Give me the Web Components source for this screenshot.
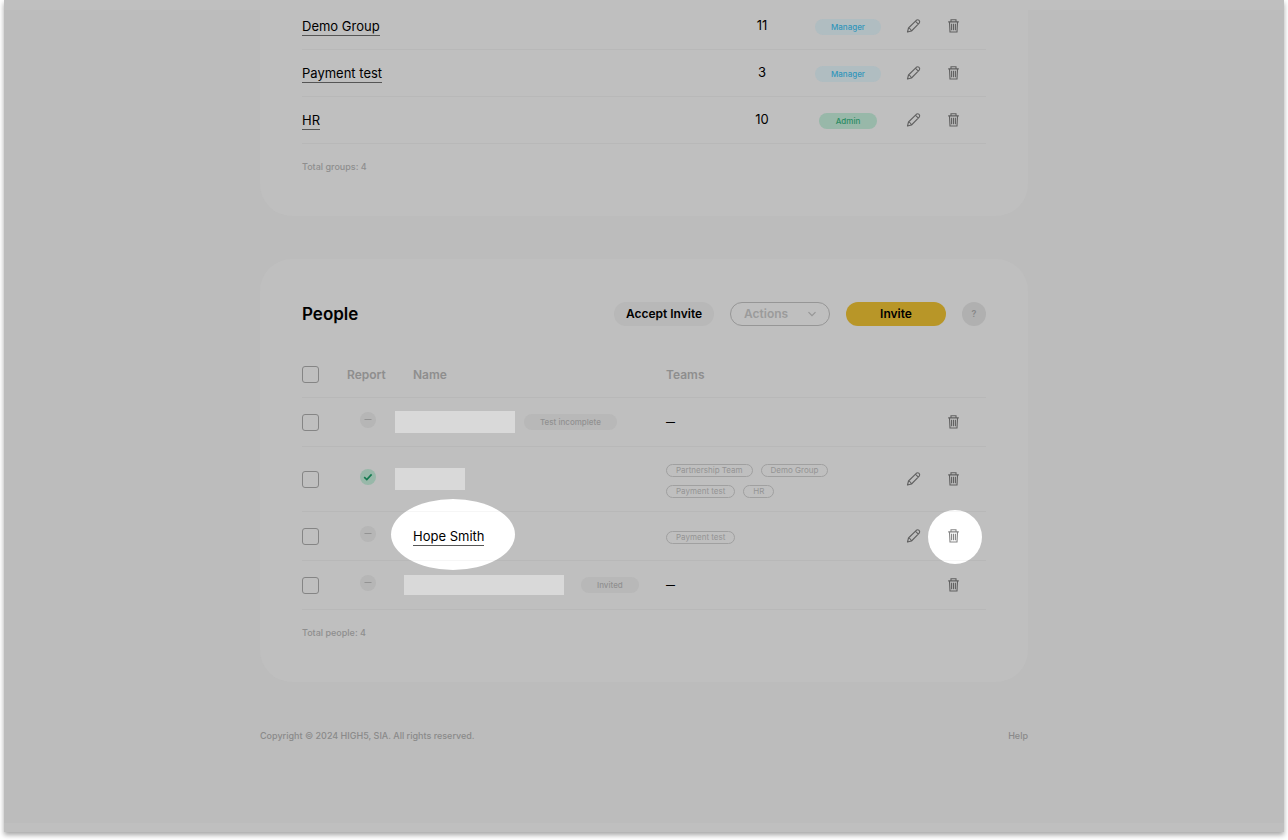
<!DOCTYPE html>
<html lang="en">
<head>
<meta charset="utf-8">
<title>Groups and people</title>
<style>
body { margin: 0; padding: 0 4px 8px; background: #fff; color: #000; font: 500 12px/16px Inter, "Liberation Sans", sans-serif; }
</style>
</head>
<body>
<team-page></team-page>

<script>
const define = (name, html, setup) => {
  const template = document.createElement('template');
  template.innerHTML = html;
  customElements.define(name, class extends HTMLElement {
    constructor() {
      super();
      this.attachShadow({ mode: 'open' }).append(template.content.cloneNode(true));
    }
    connectedCallback() {
      if (setup && !this.ready) { this.ready = true; setup(this, this.shadowRoot); }
    }
  });
};

const ICONS = {
  trash: `<path d="M3.5 4.4 4 14H11L11.5 4.4M2.2 3.9H12.8M5 3.7V1.7H10V3.7" fill="none" stroke="currentColor" stroke-width="1.1"/><path d="M5.6 5.8V12.2M7.5 5.8V12.2M9.4 5.8V12.2" stroke="currentColor" stroke-width="1.1"/>`,
  edit: `<path d="M1.5 14 2.5 10 10.3 2.3Q11.7 1.2 13.1 2.4 14.3 3.8 13.2 5.2L5.5 13ZM9.4 3.2 12.3 6.1M2.5 10Q4.7 10.5 5.5 13" fill="none" stroke="currentColor" stroke-width="1.1" stroke-linejoin="round"/>`
};

define('icon-button', `
<style>
:host { display: block; width: 16px; height: 16px; margin: 0 auto; color: #606060; }
button { display: block; width: 16px; height: 16px; padding: 0; border: 0; background: none; color: inherit; }
svg { display: block; width: 16px; height: 16px; }
</style>
<button type="button"><svg viewBox="0 0 16 16" aria-hidden="true"></svg></button>`, (host, root) => {
  root.querySelector('svg').innerHTML = ICONS[host.getAttribute('icon')];
  root.querySelector('button').setAttribute('aria-label', host.getAttribute('label'));
});

define('role-badge', `
<style>
:host { display: inline-block; box-sizing: border-box; height: 16px; padding: 0 16px; border-radius: 8px; background: #b8b8b8; color: #909090; font-size: 8px; line-height: 16px; white-space: nowrap; vertical-align: middle; }
:host([tone="manager"]) { background: #b0bdc1; color: #3296bb; }
:host([tone="admin"]) { padding: 0 17px; background: #98b8a9; color: #2a8b62; }
</style><slot></slot>`);

define('team-chip', `
<style>
:host { display: block; box-sizing: border-box; height: 13px; padding: 0 9px; border: 1px solid #a0a0a0; border-radius: 7px; color: #949494; font-size: 8px; font-weight: 400; line-height: 11px; white-space: nowrap; }
</style><slot></slot>`);

define('report-status', `
<style>
:host { display: block; width: 16px; height: 16px; border-radius: 50%; background: #b6b6b6; color: #939393; }
:host([done]) { background: #98b8a9; color: #147a50; }
svg { display: block; width: 16px; height: 16px; }
.yes, :host([done]) .no { display: none; }
:host([done]) .yes { display: inline; }
</style>
<svg viewBox="0 0 16 16" fill="none" stroke="currentColor" aria-hidden="true"><path class="no" d="M4.5 7.5H11.5"/><path class="yes" d="M4.2 8.2 6.8 10.6 11.6 5.4" stroke-width="1.6"/></svg>`);

define('name-link', `
<style>
:host { display: inline-block; padding-bottom: 2px; font-size: 13px; font-weight: 400; line-height: 16px; vertical-align: middle; }
a { display: block; padding: 3px 0 1px; border-bottom: 1px solid #555; color: #000; text-decoration: none; white-space: nowrap; }
</style><a href="#"><slot></slot></a>`);

define('panel-card', `
<style>
:host { display: block; position: relative; isolation: isolate; padding: 43px 42px 41px; border-radius: 32px; background: #bfbfbf; }
:host([continued]) { padding-top: 3px; border-radius: 0 0 32px 32px; }
.total { padding-top: 15px; color: #8e8e8e; font-size: 9px; line-height: 16px; }
</style>
<slot></slot><div class="total"><slot name="total"></slot></div>`);

const TABLE = `
:host { display: block; }
table { width: 100%; table-layout: fixed; border-collapse: separate; border-spacing: 0; }
th, td { box-sizing: border-box; padding: 0; border-bottom: 1px solid rgba(0, 0, 0, .035); text-align: left; vertical-align: middle; }
.edit { width: 40px; }
.remove { width: 52px; padding-right: 12px; position: relative; }`;

define('groups-table', `
<style>${TABLE}
td { height: 47px; }
.count { width: 80px; padding-bottom: 2px; text-align: center; font-size: 13px; font-weight: 400; }
.role { width: 92px; padding-top: 2px; text-align: center; line-height: 0; }
</style>
<table aria-label="Groups"><tbody></tbody></table>`, (host, root) => {
  const groups = [['Demo Group', 11, 'Manager'], ['Payment test', 3, 'Manager'], ['HR', 10, 'Admin']];
  root.querySelector('tbody').innerHTML = groups.map(([name, count, role]) => `
    <tr><td><name-link>${name}</name-link></td><td class="count">${count}</td>
    <td class="role"><role-badge tone="${role.toLowerCase()}">${role}</role-badge></td>
    <td class="edit"><icon-button icon="edit" label="Edit ${name}"></icon-button></td>
    <td class="remove"><icon-button icon="trash" label="Delete ${name}"></icon-button></td></tr>`).join('');
});

define('people-toolbar', `
<style>
:host { display: flex; align-items: center; gap: 16px; margin-bottom: 26px; }
h2 { margin: 0 auto 0 0; font-size: 17px; line-height: 24px; font-weight: 600; }
button, select { box-sizing: border-box; width: 100px; height: 24px; padding: 0; border: 0; border-radius: 12px; font: 600 12px/22px Inter, "Liberation Sans", sans-serif; color: #000; background: #b8b8b8; white-space: nowrap; }
.primary { background: #b89628; }
.menu { position: relative; }
select { display: block; appearance: none; padding: 0 13px; border: 1px solid #969696; background: none; color: #9b9b9b; opacity: 1; }
.menu svg { position: absolute; right: 13px; top: 7px; width: 10px; height: 10px; pointer-events: none; }
button.help { width: 24px; background: #b0b0b0; color: #888; font-size: 9px; }
</style>
<h2>People</h2>
<button type="button">Accept Invite</button>
<div class="menu"><select aria-label="Actions"><option>Actions</option></select><svg viewBox="0 0 10 10" fill="none" stroke="#969696" stroke-width="1.2" aria-hidden="true"><path d="M1.5 3.2 5 6.7 8.5 3.2"/></svg></div>
<button type="button" class="primary">Invite</button>
<button type="button" class="help" aria-label="Help">?</button>`);

define('people-table', `
<style>${TABLE}
th { height: 46px; color: #8e8e8e; font-size: 12px; font-weight: 600; }
td { height: 49px; }
tr.tall td { height: 65px; }
.pick { width: 45px; }
.report { width: 66px; }
td.report { padding: 0 0 5px 13px; }
.name { width: 253px; position: relative; }
.person { display: flex; align-items: center; }
.blank { width: 120px; height: 22px; margin: 0 9px 0 -18px; background: #d9d9d9; }
.blank.short { width: 70px; }
.blank.wide { width: 160px; height: 20px; margin: 0 17px 0 -9px; }
.teams { display: flex; flex-wrap: wrap; gap: 8px; padding-top: 3px; }
.none { font-size: 9px; font-weight: 600; }
input { appearance: none; display: block; box-sizing: border-box; width: 17px; height: 17px; margin: 0; border: 1px solid #858585; border-radius: 3px; }
.spot { position: absolute; z-index: -1; border-radius: 50%; background: #fff; }
.name .spot { left: -22px; top: -13px; width: 124px; height: 71px; }
.remove .spot { left: -6px; top: -2px; width: 54px; height: 54px; }
.spot + icon-button { color: #858585; }
</style>
<table>
<thead><tr><th class="pick"><input type="checkbox" aria-label="Select everyone"></th><th class="report">Report</th><th class="name">Name</th><th>Teams</th><th class="edit"></th><th class="remove"></th></tr></thead>
<tbody></tbody></table>`, (host, root) => {
  const people = [
    { person: '<span class="blank"></span><role-badge>Test incomplete</role-badge>', teams: [] },
    { person: '<span class="blank short"></span>', teams: ['Partnership Team', 'Demo Group', 'Payment test', 'HR'], done: true },
    { person: '<name-link>Hope Smith</name-link>', teams: ['Payment test'], spot: true },
    { person: '<span class="blank wide"></span><role-badge>Invited</role-badge>', teams: [] }
  ];
  root.querySelector('tbody').innerHTML = people.map(({ person, teams, done, spot }) => {
    const light = spot ? '<span class="spot"></span>' : '';
    return `<tr class="${done ? 'tall' : ''}"><td class="pick"><input type="checkbox" aria-label="Select person"></td>
    <td class="report"><report-status ${done ? 'done' : ''}></report-status></td>
    <td class="name">${light}<div class="person">${person}</div></td>
    <td class="${teams.length ? '' : 'none'}">${teams.length ? `<div class="teams">${teams.map(t => `<team-chip>${t}</team-chip>`).join('')}</div>` : '—'}</td>
    <td class="edit">${teams.length ? '<icon-button icon="edit" label="Edit person"></icon-button>' : ''}</td>
    <td class="remove">${light}<icon-button icon="trash" label="Remove person"></icon-button></td></tr>`;
  }).join('');
});

define('site-footer', `
<style>
:host { display: flex; justify-content: space-between; margin-top: 46px; color: #8a8a8a; font-size: 9px; line-height: 16px; }
a { color: inherit; text-decoration: none; }
</style>
<span>Copyright © 2024 HIGH5, SIA. All rights reserved.</span><a href="#">Help</a>`);

define('team-page', `
<style>
:host { display: block; }
.frame { box-sizing: border-box; min-height: calc(100vh - 8px); padding-bottom: 32px; box-shadow: 0 3px 5px rgba(0, 0, 0, .35);
  background: linear-gradient(#bfbfbf, #bfbfbf) top / 100% 10px no-repeat, linear-gradient(#bfbfbf, #bfbfbf) bottom / 100% 9px no-repeat, #bcbcbc; }
main { max-width: 768px; margin: 0 auto; }
panel-card + panel-card { margin-top: 43px; }
</style>
<div class="frame"><main>
<panel-card continued><groups-table></groups-table><span slot="total">Total groups: 4</span></panel-card>
<panel-card><people-toolbar></people-toolbar><people-table></people-table><span slot="total">Total people: 4</span></panel-card>
<site-footer></site-footer>
</main></div>`);
</script>
</body>
</html>
